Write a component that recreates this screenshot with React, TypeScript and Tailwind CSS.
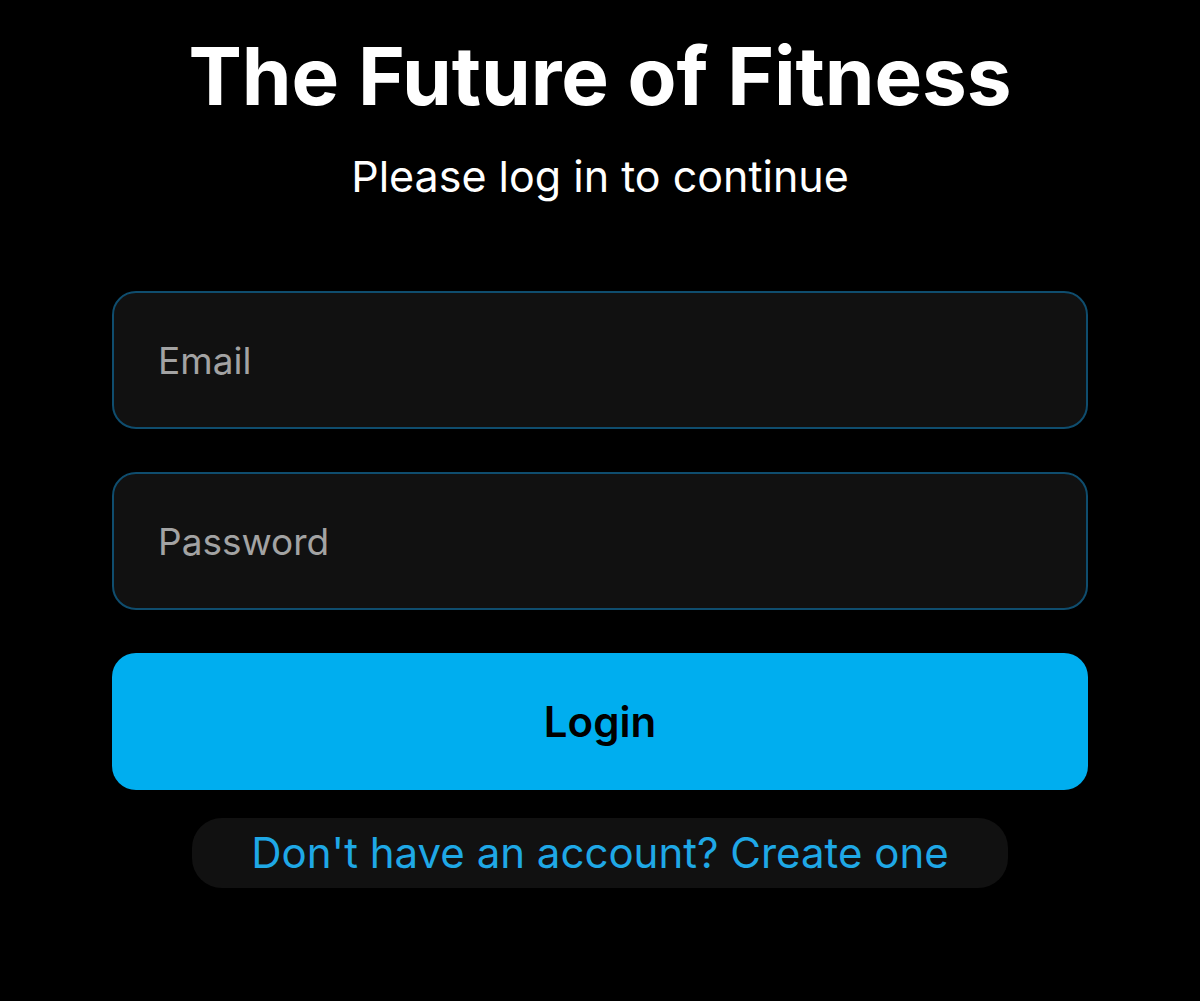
export default function App() {
  return (
    <div
      className="min-h-screen w-full bg-black px-[112px] pt-[36px]"
      style={{ fontFamily: 'Inter, "Noto Sans", sans-serif' }}
    >
      <h1 className="text-center text-[80px] font-bold leading-none tracking-[-0.1px] text-white">
        The Future of Fitness
      </h1>
      <p className="mt-[39px] text-center text-[43px] leading-none text-white">
        Please log in to continue
      </p>

      <form className="mt-[93px] flex flex-col gap-[43px]" onSubmit={(e) => e.preventDefault()}>
        <input
          type="email"
          placeholder="Email"
          className="h-[138px] w-full rounded-[24px] border-2 border-[#0f4d6e] bg-[#111111] px-[44px] text-[37px] text-white outline-none placeholder:text-[#a3a3a3]"
        />
        <input
          type="password"
          placeholder="Password"
          className="h-[138px] w-full rounded-[24px] border-2 border-[#0f4d6e] bg-[#111111] px-[44px] text-[37px] text-white outline-none placeholder:text-[#a3a3a3]"
        />
        <button
          type="submit"
          className="h-[137px] w-full rounded-[24px] bg-[#00aeef] text-[42px] font-semibold text-black"
        >
          Login
        </button>
      </form>

      <div className="mt-[28px] flex justify-center">
        <button
          type="button"
          className="h-[70px] w-[816px] rounded-[30px] bg-[#111111] text-[42px] leading-none text-[#1fa8e6]"
        >
          Don't have an account? Create one
        </button>
      </div>
    </div>
  );
}
